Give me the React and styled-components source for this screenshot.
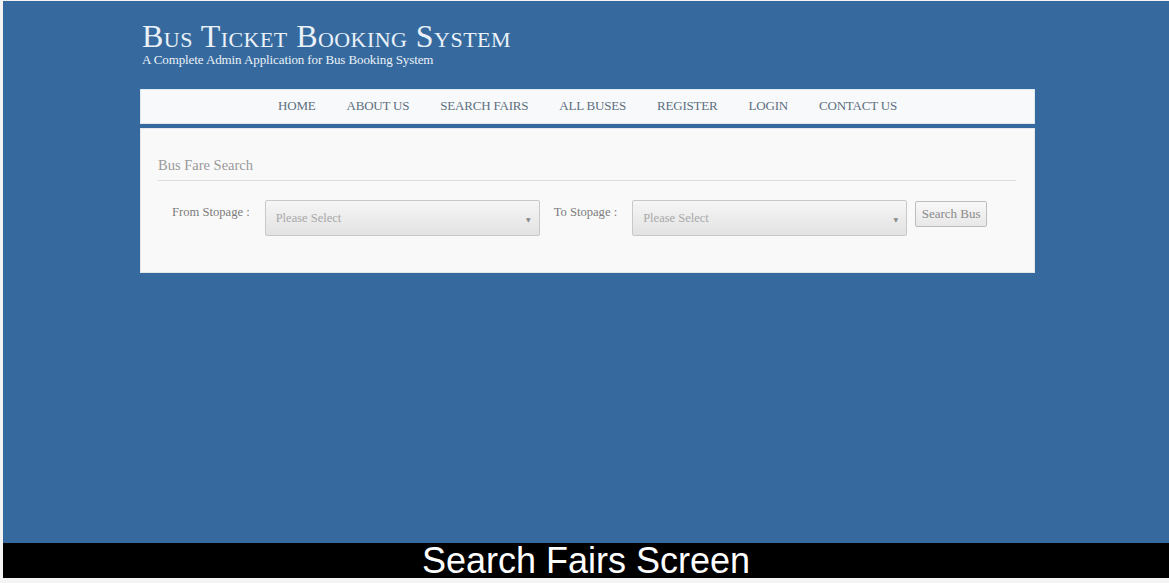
import styled, { createGlobalStyle } from "styled-components";

const GlobalStyle = createGlobalStyle`
  html, body {
    margin: 0;
    padding: 0;
    background: #f4f4f4;
  }
  #root {
    width: 1169px;
    height: 583px;
    overflow: hidden;
  }
`;

const navItems = [
  "HOME",
  "ABOUT US",
  "SEARCH FAIRS",
  "ALL BUSES",
  "REGISTER",
  "LOGIN",
  "CONTACT US",
];

function StopSelect() {
  return (
    <SelectBox>
      <span>Please Select</span>
      <Arrow>▼</Arrow>
    </SelectBox>
  );
}

export default function App() {
  return (
    <>
      <GlobalStyle />
      <Frame>
        <Screen>
          <Container>
            <Header>
              <Title>Bus Ticket Booking System</Title>
              <Subtitle>A Complete Admin Application for Bus Booking System</Subtitle>
            </Header>

            <NavBar>
              {navItems.map((item) => (
                <NavLink key={item}>{item}</NavLink>
              ))}
            </NavBar>

            <Card>
              <CardTitle>Bus Fare Search</CardTitle>
              <SearchRow>
                <FieldLabel>From Stopage :</FieldLabel>
                <StopSelect />
                <FieldLabel $to>To Stopage :</FieldLabel>
                <StopSelect />
                <SearchButton>Search Bus</SearchButton>
              </SearchRow>
            </Card>
          </Container>
        </Screen>
        <Caption>Search Fairs Screen</Caption>
      </Frame>
    </>
  );
}

const Frame = styled.div`
  display: flex;
  flex-direction: column;
  height: 578px;
  padding: 1px 0 0 3px;
  box-sizing: border-box;
  width: 1169px;
`;

const Screen = styled.div`
  flex: 1;
  background-color: #366a9e;
  padding-left: 137px;
`;

const Container = styled.div`
  width: 895px;
`;

const Header = styled.div`
  padding-top: 19px;
  height: 88px;
  box-sizing: border-box;
  color: #eaf1f8;
  font-family: "Liberation Serif", "DejaVu Serif", serif;
`;

const Title = styled.h1`
  margin: 0;
  padding-left: 2px;
  font-size: 32px;
  line-height: 33px;
  font-weight: normal;
  font-variant: small-caps;
  letter-spacing: 0.45px;
`;

const Subtitle = styled.div`
  padding-left: 2px;
  font-size: 13px;
  line-height: 14px;
  letter-spacing: -0.1px;
`;

const NavBar = styled.nav`
  display: flex;
  justify-content: center;
  align-items: center;
  gap: 31px;
  height: 35px;
  padding-bottom: 1px;
  box-sizing: border-box;
  background: #f7f9fb;
  border: 1px solid #e0e8f0;
  margin-bottom: 4px;
`;

const NavLink = styled.a`
  font-family: "Liberation Serif", "DejaVu Serif", serif;
  font-size: 13px;
  color: #5d6f7e;
  letter-spacing: -0.2px;
  cursor: pointer;
`;

const Card = styled.div`
  height: 145px;
  box-sizing: border-box;
  background: #f9f9f9;
  border: 1px solid #e4e8ec;
  padding: 28px 18px 0 17px;
  font-family: "Liberation Serif", "DejaVu Serif", serif;
`;

const CardTitle = styled.div`
  font-size: 14.5px;
  color: #9a9a9a;
  padding-bottom: 6px;
  border-bottom: 1px solid #dcdcdc;
`;

const SearchRow = styled.div`
  display: flex;
  align-items: flex-start;
  padding-top: 19px;
  padding-left: 14px;
`;

const FieldLabel = styled.div`
  font-size: 12.6px;
  color: #7c7c7c;
  padding-top: 5px;
  margin-right: 15px;
  margin-left: ${(p) => (p.$to ? "14px" : "0")};
`;

const SelectBox = styled.div`
  width: 275px;
  height: 36px;
  box-sizing: border-box;
  display: flex;
  align-items: center;
  justify-content: space-between;
  padding: 0 8px 0 10px;
  border: 1px solid #c8c8c8;
  border-radius: 2px;
  background: linear-gradient(#f6f6f6, #e2e2e2);
  font-size: 12.5px;
  color: #a9a9a9;
`;

const Arrow = styled.span`
  font-family: "DejaVu Sans", sans-serif;
  font-size: 6px;
  color: #888;
  padding-top: 2px;
`;

const SearchButton = styled.button`
  margin-left: 8px;
  margin-top: 1px;
  width: 72px;
  height: 26px;
  padding: 0;
  border: 1px solid #bdbdbd;
  border-radius: 2px;
  background: linear-gradient(#f8f8f8, #e8e8e8);
  font-family: "Liberation Serif", "DejaVu Serif", serif;
  font-size: 13px;
  color: #8a8a8a;
`;

const Caption = styled.div`
  height: 35px;
  display: flex;
  align-items: center;
  justify-content: center;
  background: #000;
  color: #fff;
  font-family: "Liberation Sans", Arial, sans-serif;
  font-size: 36px;
  line-height: 35px;
`;
